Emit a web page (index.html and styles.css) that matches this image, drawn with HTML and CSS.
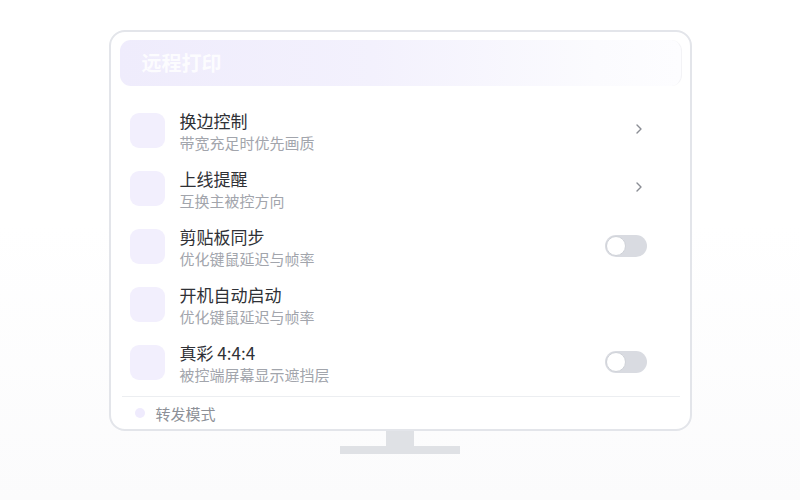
FILE: index.html
```html
<!DOCTYPE html>
<html lang="zh">
<head>
<meta charset="utf-8">
<title>远程打印</title>
<link rel="stylesheet" href="styles.css">
</head>
<body>
<div class="stage">
  <div class="monitor">
    <div class="header">远程打印</div>
    <div class="list">
      <div class="row">
        <div class="icon"></div>
        <div class="text"><div class="title">换边控制</div><div class="sub">带宽充足时优先画质</div></div>
        <svg class="chev" width="8" height="12" viewBox="0 0 8 12"><path d="M2 2l4 4-4 4" fill="none" stroke="#8a8d94" stroke-width="1.4" stroke-linecap="round" stroke-linejoin="round"/></svg>
      </div>
      <div class="row">
        <div class="icon"></div>
        <div class="text"><div class="title">上线提醒</div><div class="sub">互换主被控方向</div></div>
        <svg class="chev" width="8" height="12" viewBox="0 0 8 12"><path d="M2 2l4 4-4 4" fill="none" stroke="#8a8d94" stroke-width="1.4" stroke-linecap="round" stroke-linejoin="round"/></svg>
      </div>
      <div class="row">
        <div class="icon"></div>
        <div class="text"><div class="title">剪贴板同步</div><div class="sub">优化键鼠延迟与帧率</div></div>
        <div class="toggle"><div class="knob"></div></div>
      </div>
      <div class="row">
        <div class="icon"></div>
        <div class="text"><div class="title">开机自动启动</div><div class="sub">优化键鼠延迟与帧率</div></div>
      </div>
      <div class="row">
        <div class="icon"></div>
        <div class="text"><div class="title">真彩 4:4:4</div><div class="sub">被控端屏幕显示遮挡层</div></div>
        <div class="toggle"><div class="knob"></div></div>
      </div>
    </div>
    <div class="footer"><span class="dot"></span><span class="ftext">转发模式</span></div>
  </div>
  <div class="neck"></div>
  <div class="base"></div>
</div>
</body>
</html>
```
FILE: styles.css
```css
html, body {
  margin: 0;
  padding: 0;
}
body {
  width: 800px;
  height: 500px;
  background: linear-gradient(180deg, #ffffff 0%, #ffffff 45%, #fbfbfc 100%);
  font-family: "Noto Sans CJK SC", "Noto Sans", sans-serif;
  overflow: hidden;
}
.stage {
  display: flex;
  flex-direction: column;
  align-items: center;
  padding-top: 30px;
}
.monitor {
  box-sizing: border-box;
  width: 583px;
  height: 401px;
  border: 2px solid #e3e5ea;
  border-radius: 16px;
  background: #ffffff;
  padding: 8px 8px 0 9px;
  display: flex;
  flex-direction: column;
}
.header {
  height: 46px;
  border-radius: 11px;
  background: linear-gradient(90deg, #efecfc 0%, #f3f1fd 45%, #fbfbfe 85%, #fdfdff 100%);
  color: rgba(255, 255, 255, 0.85);
  font-size: 20px;
  font-weight: 700;
  line-height: 46px;
  padding-left: 22px;
  border-right: 1px solid #f3f3f6;
}
.list {
  margin-top: 15px;
  display: flex;
  flex-direction: column;
}
.row {
  height: 58px;
  display: flex;
  align-items: center;
  padding: 0 35px 0 10px;
}
.icon {
  width: 35px;
  height: 35px;
  border-radius: 9px;
  background: #f2effd;
  flex: none;
}
.text {
  flex: 1;
  margin-left: 15px;
  padding-top: 4px;
}
.title {
  font-size: 17px;
  line-height: 22px;
  color: #2f3136;
}
.sub {
  font-size: 15px;
  line-height: 22px;
  color: #a2a5ac;
}
.chev {
  margin-right: 4px;
  margin-top: -2px;
}
.toggle {
  box-sizing: border-box;
  width: 42px;
  height: 22px;
  border-radius: 11px;
  background: #d9dbe1;
  display: flex;
  align-items: center;
  padding-left: 1px;
}
.knob {
  box-sizing: border-box;
  width: 20px;
  height: 20px;
  border-radius: 50%;
  background: #ffffff;
  border: 1px solid #cfd2d8;
}
.footer {
  margin: 5px 2px 0 2px;
  border-top: 1px solid #eceef1;
  height: 32px;
  display: flex;
  align-items: center;
  padding-left: 13px;
}
.dot {
  width: 10px;
  height: 10px;
  border-radius: 50%;
  background: #efebfd;
}
.ftext {
  margin-left: 11px;
  font-size: 15px;
  color: #8d9097;
}
.neck {
  width: 28px;
  height: 15px;
  background: #dfe1e5;
}
.base {
  width: 120px;
  height: 8px;
  background: #dfe1e5;
}
```
